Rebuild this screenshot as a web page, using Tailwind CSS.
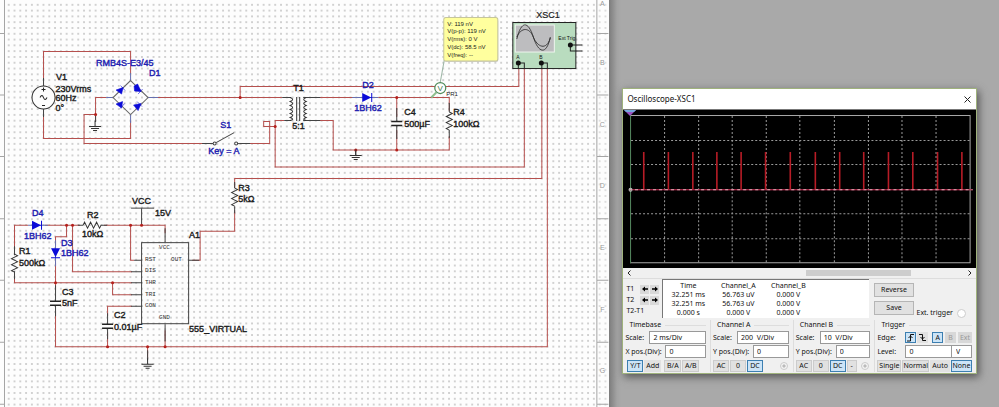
<!DOCTYPE html>
<html lang="en">
<head>
<meta charset="utf-8">
<title>Circuit simulation</title>
<script src="https://cdn.jsdelivr.net/npm/@tailwindcss/browser@4"></script>
</head>
<body class="bg-[#a9a9a9] font-['Noto_Sans',sans-serif] text-[7px] leading-[10px] text-[#111]">
<div class="flex min-h-screen items-stretch overflow-hidden">
<main class="w-[61%] shrink-0 overflow-hidden bg-[#fdfdfd]">
<svg viewBox="0 0 609 407" class="block w-full" role="img" aria-label="555 timer and rectifier schematic" font-family="Liberation Sans, sans-serif" font-size="9">
  <defs>
    <pattern id="dots" width="5.79" height="5.79" x="11.6" y="1.9" patternUnits="userSpaceOnUse"><rect x="2.3" y="2.3" width="1.200" height="1.200" fill="#888"/></pattern>
    <g id="gnd" stroke="#333" fill="none"><path d="M0-6V0M-6 0H6M-4 2H4M-2 4H2"/></g>
    <path id="res" d="M0-9l3 1.5-6 3 6 3-6 3 6 3-6 3 3 1.5" fill="none" stroke="#333"/>
    <path id="dio" d="M-5-4.5V4.5L4 0Z M4-4.5H5V4.5H4Z" fill="#0a0ad8"/>
  </defs>
  <rect width="609" height="407" fill="#fdfdfd"/>
  <rect x="5" width="591" height="407" fill="url(#dots)"/>
  <rect x="596" width="12" height="407" fill="url(#dots)" opacity=".7"/>
  <!-- sheet rulers -->
  <path d="M4.5 0V407M596.5 0V407M0 33.500h4M0 95h4M0 156.500h4M0 218.500h4M0 280h4M0 342h4M0 404h4M596 33.500h12M596 95h12M596 156.500h12M596 218.500h12M596 280h12M596 342h12M596 404h12" stroke="#a5a5a5" fill="none"/>
  <g fill="#999" font-size="7" text-anchor="middle"><text x="602" y="6">A</text><text x="602" y="65">B</text><text x="602" y="127">C</text><text x="602" y="188">D</text><text x="602" y="250">E</text><text x="602" y="312">F</text><text x="602" y="373">G</text></g>
  <!-- wires -->
  <g fill="none" stroke="#b5504e">
    <path d="M43.500 80V51.500H130.500V74M43.500 115V138.500H130.500V121"/>
    <path d="M106 97.500H95.500V121M95.500 114.500H84V143.500H208M154 97.500H282M240 97.500V86.500H518.500V64"/>
    <path d="M240 143.500H269.500V121.500H263.500V126.500H275M284 120.500H275V167H524V64"/>
    <path d="M312 97.500H355M378 97.500H449V111M449 136V150H333V120.500H312M396.500 97.500V117M396.500 130V150"/>
    <path d="M541.500 64V178.500H234.500V188M234.500 210V231H200V260H192M547 64V346.500H55.500V310"/>
    <path d="M14.500 250V225H28M45 225H80M104 225H165V233M66.500 225V236.500H55.500V245M72.500 225V271.500H132M14.500 273V282.500H132M55.500 262V290M112.500 282.500V294.500H132M130.500 225V260H134M107.500 316V306H132M107.500 332V346M165 330V346M147.500 346V358"/>
  </g>
  <!-- component leads -->
  <g fill="none" stroke="#444">
    <path d="M43.500 78V86M43.500 109V117M95.500 116V122M202 143.500H213M240 143.500H250M282 97.500H291M284 120.500H291M303 97.500H320M303 120.500H320M396.500 108V121M396.500 126V139M449 103V112M449 130V138M234.500 182V188M234.500 206V213M355.500 150V156M55.500 285V301M55.500 305V316M107.500 313V324M107.500 328V339M141.500 208V225M165 228V242M165 324V341M188 260H199M134 260H142M131 271.500H142M131 282.500H142M131 294.500H142M131 306H142M14.500 246V255M14.500 271V279M78 225H83M101 225H107M147.500 350V360"/>
    <path d="M131 208H154"/>
    <rect x="141.500" y="242.500" width="47" height="81" fill="none"/>
  </g>
  <g stroke="#222" stroke-width="1.500"><path d="M391 121.500H402M391 125.500H402M50 301H61M50 305H61M102 324H113M102 328H113"/></g>
  <!-- blue leads -->
  <path d="M106 97.500H113M148 97.500H158M130.500 73V81M130.500 115V123M352 97.500H378M28 225H48M55.500 240V266" stroke="#6670b0" fill="none"/>
  <!-- junctions -->
  <g fill="#b5201c"><circle cx="95.500" cy="114.500" r="1.500"/><circle cx="240" cy="97.500" r="1.500"/><circle cx="275" cy="126.500" r="1.500"/><circle cx="396.500" cy="97.500" r="1.500"/><circle cx="396.500" cy="150" r="1.500"/><circle cx="355.500" cy="150" r="1.500"/><circle cx="66.500" cy="225" r="1.500"/><circle cx="72.500" cy="225" r="1.500"/><circle cx="130.500" cy="225" r="1.500"/><circle cx="141.500" cy="225" r="1.500"/><circle cx="55.500" cy="282.500" r="1.500"/><circle cx="112.500" cy="282.500" r="1.500"/><circle cx="107.500" cy="346.500" r="1.500"/><circle cx="147.500" cy="346.500" r="1.500"/><circle cx="165" cy="346.500" r="1.500"/></g>
  <!-- AC source -->
  <circle cx="43.500" cy="97.500" r="11.500" fill="#fdfdfd" stroke="#333"/>
  <path d="M40 97.500q2-4 3.500 0t3.500 0M41.500 89.500h4M43.500 87.500v4M42 105.500h3" fill="none" stroke="#222"/>
  <!-- bridge rectifier -->
  <path d="M130.500 80.500L148 97.500L130.500 114.500L113 97.500Z" fill="none" stroke="#666"/>
  <g fill="#0a0ad8" stroke="#0a0ad8" stroke-width=".6">
    <path d="M116 90L123 87.500L121.500 94ZM120.500 85.500L125 90.500"/>
    <path d="M134 86L134.500 91L141 91.500L137.500 84ZM138 94L142.500 89"/>
    <path d="M116 104L122.500 101.500L121.500 108ZM120 108.500L124.500 103.500"/>
    <path d="M133.500 105L138 110.500L141 103.500ZM137 101.500L142 106.500"/>
  </g>
  <use href="#gnd" x="95" y="126.500"/><use href="#gnd" x="355.500" y="155.500"/><use href="#gnd" x="147.500" y="364"/>
  <use href="#res" x="449" y="121"/><use href="#res" x="234.500" y="197"/><use href="#res" x="14.500" y="263"/>
  <use href="#res" transform="translate(92 225) rotate(90)"/>
  <use href="#dio" x="367" y="97.500"/><use href="#dio" x="37" y="225"/><use href="#dio" transform="translate(55.500 253) rotate(90)"/>
  <!-- switch -->
  <g fill="#fdfdfd" stroke="#444"><path d="M236 143.500H242"/><circle cx="214.500" cy="143.500" r="1.500"/><circle cx="236" cy="143.500" r="1.500"/><path d="M216 142.500L234 132.500"/></g>
  <!-- transformer -->
  <g fill="none" stroke="#333"><path d="M296.500 97V121M299.500 97V121"/><path d="M290 97.500q5 2 0 4q5 2 0 4q5 2 0 4q5 2 0 4q5 2 0 4q5 2 0 3M306 97.500q-5 2 0 4q-5 2 0 4q-5 2 0 4q-5 2 0 4q-5 2 0 4q-5 2 0 3"/></g>
  <!-- probe -->
  <path d="M431 97.500l5-5" stroke="#8fc08f" stroke-width="2"/><path d="M440 82L444 60" stroke="#9bb5a5"/>
  <circle cx="440" cy="88" r="5.500" fill="#fdfdfd" stroke="#4c8a58" stroke-width="1.200"/><text x="440" y="91" text-anchor="middle" font-size="8" fill="#3e7a4a">V</text>
  <text x="446" y="96" font-size="6" fill="#222">PR1</text>
  <rect x="444" y="19" width="54" height="43" rx="2" fill="#bbb" opacity=".6"/>
  <rect x="443.500" y="17.500" width="54" height="43.500" rx="2" fill="#ffff9e" stroke="#c6c69a"/>
  <g font-size="6" fill="#222"><text x="447" y="26">V: 119 nV</text><text x="447" y="33">V(p-p): 119 nV</text><text x="447" y="41">V(rms): 0 V</text><text x="447" y="48.500">V(dc): 58.5 nV</text><text x="447" y="56.500">V(freq): --</text></g>
  <!-- oscilloscope instrument -->
  <rect x="512.500" y="22.500" width="63" height="46" fill="#b9dcbf" stroke="#222"/>
  <rect x="515" y="25" width="39" height="27" fill="#bdbdbf" stroke="#eef5ee"/>
  <path d="M516.500 39C521 20 528 21 533 37S546 56 550 37M516.500 37C521 27 529 27 533 37S546 51 550 38" fill="none" stroke="#333" stroke-width=".9"/>
  <path d="M518 63h6v6M541 63h6v6M518 63v6M541.500 63v6M570 45h12M570 45v6h12" fill="none" stroke="#222"/>
  <g fill="#111"><circle cx="518" cy="63" r="2.500"/><circle cx="541" cy="63" r="2.500"/><circle cx="570" cy="45" r="2.500"/></g>
  <g font-size="5" fill="#111"><text x="516" y="59">A</text><text x="539" y="59">B</text><text x="558" y="40">Ext Trig</text></g>
  <!-- labels -->
  <g fill="#1c1c1c" stroke="#1c1c1c" stroke-width=".4">
    <text x="56" y="80">V1</text><text x="55.500" y="92">230Vrms</text><text x="55.500" y="101">60Hz</text><text x="55.500" y="111">0°</text>
    <text x="293" y="91">T1</text><text x="292" y="129">5:1</text><text x="404" y="115">C4</text><text x="404" y="127">500µF</text><text x="453" y="115">R4</text><text x="453" y="127">100kΩ</text>
    <text x="238" y="191">R3</text><text x="238" y="202">5kΩ</text><text x="132" y="204">VCC</text><text x="155" y="216">15V</text><text x="189" y="238">A1</text>
    <text x="87" y="218">R2</text><text x="82" y="237">10kΩ</text><text x="19" y="254">R1</text><text x="19" y="266">500kΩ</text><text x="62" y="295">C3</text><text x="62" y="306">5nF</text>
    <text x="114" y="318">C2</text><text x="114" y="330">0.01µF</text><text x="189" y="332">555_VIRTUAL</text>
  </g>
  <text x="536" y="18" fill="#1c1c1c" stroke="#1c1c1c" stroke-width=".2">XSC1</text>
  <g fill="#2020b0" stroke="#2020b0" stroke-width=".4">
    <text x="96" y="66">RMB4S-E3/45</text><text x="149" y="76">D1</text><text x="362" y="88">D2</text><text x="354" y="111">1BH62</text><text x="220" y="128">S1</text><text x="208" y="154">Key = A</text>
    <text x="32" y="216">D4</text><text x="24" y="239">1BH62</text><text x="61" y="246">D3</text><text x="61" y="256">1BH62</text>
  </g>
  <g font-family="Liberation Mono, monospace" font-size="6" fill="#333"><text x="159" y="249">VCC</text><text x="145" y="261">RST</text><text x="171" y="261">OUT</text><text x="145" y="272">DIS</text><text x="145" y="284">THR</text><text x="145" y="296">TRI</text><text x="145" y="307">CON</text><text x="159" y="319">GND</text></g>
</svg>
</main>

<div class="flex min-w-0 flex-1 items-start bg-[linear-gradient(to_right,#7c7c7c,#a3a3a3_8px,#a9a9a9_12px)] pt-[88px] pr-[22px] pl-[13px]">
<section aria-label="Oscilloscope" class="min-w-0 flex-1 border border-[#9fb27c] bg-[#f0f0f0] shadow-[2px_3px_8px_#555]">
  <header class="flex h-5 items-center justify-between bg-white pr-1 pl-1">
    <h1 class="text-[8px]">Oscilloscope-XSC1</h1>
    <button aria-label="Close" class="p-px"><svg class="size-[7px]" viewBox="0 0 7 7" stroke="#222" fill="none"><path d="M.5.5l6 6M6.500.5l-6 6"/></svg></button>
  </header>
  <div class="border-t border-[#777] bg-black">
  <svg viewBox="623 110 352 158" class="block w-full" role="img" aria-label="Pulse train on channel A">
    <g stroke="#9a9a9a" stroke-dasharray="2 2" fill="none"><path d="M664.500 116V262M698.500 116V262M732 116V262M766 116V262M799.500 116V262M834 116V262M868 116V262M901.500 116V262M935.500 116V262M631 140.500H969M631 164.500H969M631 213.500H969M631 238.500H969"/></g>
    <rect x="630.500" y="115.500" width="339" height="147" fill="none" stroke="#a8a8a8"/>
    <path d="M630.500 115V263" stroke="#4e8058"/>
    <path d="M629 189.500H972" stroke="#d03058"/><path d="M629 189.500H972" stroke="#e5b5bf" stroke-dasharray="3 3"/>
    <path d="M643.700 152V189M668.300 152V189M692.700 152V189M716.700 152V189M740.900 152V189M765.300 152V189M790 152V189M815 152V189M839.300 152V189M863.300 152V189M888 152V189M912.300 152V189M937 152V189M961.300 152V189" stroke="#b71c26" stroke-width="1.600"/>
    <path d="M624 110H636L630 116Z" fill="#9a54c4"/><path d="M624 110H636L634 112H626Z" fill="#77a7dc"/>
    <circle cx="630.500" cy="189.500" r="1.500" fill="none" stroke="#bbb"/>
  </svg>
  </div>
  <div class="flex h-[11px] items-center border-b border-[#ddd] px-1">
    <button aria-label="Scroll left"><svg class="h-[6px] w-1" viewBox="0 0 4 6" stroke="#222" fill="none"><path d="M3.500.5L1 3l2.500 2.500"/></svg></button>
    <div class="mx-1 flex-1"><div class="ml-[52%] h-[6px] w-[32%] bg-[#cdcdcd]"></div></div>
    <button aria-label="Scroll right"><svg class="h-[6px] w-1" viewBox="0 0 4 6" stroke="#222" fill="none"><path d="M.5.5L3 3L.5 5.500"/></svg></button>
  </div>
  <div class="flex h-[39px]">
    <div class="flex w-[39px] shrink-0 flex-col gap-px pt-[5px] pl-[3px]">
      <div class="flex items-center gap-px"><span class="w-[13px]">T1</span>
        <button aria-label="T1 left" class="flex size-[9px] items-center justify-center bg-[#d9d9d9]"><svg class="size-[6px]" viewBox="0 0 7 7"><path d="M0 3.500L3.500.5V2.500H7V4.500H3.500V6.500Z"/></svg></button>
        <button aria-label="T1 right" class="flex size-[9px] items-center justify-center bg-[#d9d9d9]"><svg class="size-[6px]" viewBox="0 0 7 7"><path d="M7 3.500L3.500.5V2.500H0V4.500H3.500V6.500Z"/></svg></button></div>
      <div class="flex items-center gap-px"><span class="w-[13px]">T2</span>
        <button aria-label="T2 left" class="flex size-[9px] items-center justify-center bg-[#d9d9d9]"><svg class="size-[6px]" viewBox="0 0 7 7"><path d="M0 3.500L3.500.5V2.500H7V4.500H3.500V6.500Z"/></svg></button>
        <button aria-label="T2 right" class="flex size-[9px] items-center justify-center bg-[#d9d9d9]"><svg class="size-[6px]" viewBox="0 0 7 7"><path d="M7 3.500L3.500.5V2.500H0V4.500H3.500V6.500Z"/></svg></button></div>
      <span>T2-T1</span>
    </div>
    <div class="min-w-0 flex-1 border-t border-l border-[#777] bg-white pt-px">
      <table class="w-[150px] table-fixed text-center leading-[9px]">
        <thead><tr><th class="p-0 font-normal">Time</th><th class="p-0 font-normal">Channel_A</th><th class="p-0 font-normal">Channel_B</th></tr></thead>
        <tbody><tr><td class="p-0">32.251 ms</td><td class="p-0">56.763 uV</td><td class="p-0">0.000 V</td></tr>
        <tr><td class="p-0">32.251 ms</td><td class="p-0">56.763 uV</td><td class="p-0">0.000 V</td></tr>
        <tr><td class="p-0">0.000 s</td><td class="p-0">0.000 V</td><td class="p-0">0.000 V</td></tr></tbody>
      </table>
    </div>
    <div class="flex w-[107px] shrink-0 items-end justify-between pr-[10px] pl-[5px]">
      <div class="flex flex-col gap-1 self-start pt-1">
        <button class="h-[14px] w-10 border border-[#b5b5b5] bg-[#e1e1e1]">Reverse</button>
        <button class="h-[14px] w-10 border border-[#b5b5b5] bg-[#e1e1e1]">Save</button>
      </div>
      <label class="flex items-center gap-1 whitespace-nowrap">Ext. trigger<input type="radio" class="size-[9px] appearance-none rounded-full border border-[#ccc] bg-white"></label>
    </div>
  </div>
  <div class="mt-[2px] grid grid-cols-[minmax(0,87fr)_minmax(0,83fr)_minmax(0,82fr)_minmax(0,102fr)] pb-px">
    <section class="flex flex-col gap-px pr-1 pl-[2px]">
      <div class="flex h-[10px] items-center gap-1 pl-1"><h2>Timebase</h2><span class="h-px flex-1 bg-[#ddd]"></span></div>
      <div class="flex items-center gap-1"><label for="ts" class="w-[20px]">Scale:</label><input id="ts" value="2 ms/Div" class="h-[13px] min-w-0 flex-1 border border-[#999] bg-white px-[3px]"></div>
      <div class="flex items-center gap-[2px] whitespace-nowrap"><label for="tx" class="w-[38px]">X pos.(Div):</label><input id="tx" value="0" class="h-[13px] min-w-0 flex-1 border border-[#999] bg-white px-[3px]"></div>
      <div class="flex gap-px pt-px pl-[2px]">
        <button class="h-3 w-4 border border-[#3c7fb1] bg-[#cce4f7]">Y/T</button><button class="h-3 w-[17px] bg-[#e1e1e1]">Add</button><button class="ml-[2px] h-3 w-[17px] border border-[#ccc] bg-[#e1e1e1]">B/A</button><button class="h-3 w-[17px] border border-[#ccc] bg-[#e1e1e1]">A/B</button>
      </div>
    </section>
    <section class="flex flex-col gap-px border-l border-[#ddd] pr-1 pl-[2px]">
      <div class="flex h-[10px] items-center gap-1 pl-1"><h2>Channel A</h2><span class="h-px flex-1 bg-[#ddd]"></span></div>
      <div class="flex items-center gap-1"><label for="as" class="w-[20px]">Scale:</label><input id="as" value="200  V/Div" class="h-[13px] min-w-0 flex-1 border border-[#999] bg-white px-[3px]"></div>
      <div class="flex items-center gap-[2px] whitespace-nowrap"><label for="ay" class="w-[38px]">Y pos.(Div):</label><input id="ay" value="0" class="h-[13px] min-w-0 flex-1 border border-[#999] bg-white px-[3px]"></div>
      <div class="flex items-center gap-px pt-px">
        <button class="h-3 w-4 border border-[#ccc] bg-[#e1e1e1]">AC</button><button class="h-3 w-4 border border-[#ccc] bg-[#e1e1e1]">0</button><button class="h-3 w-4 border border-[#3c7fb1] bg-[#cce4f7]">DC</button>
        <input type="radio" aria-label="Channel A input" class="mr-px ml-auto size-2 appearance-none rounded-full border border-[#ccc] bg-[radial-gradient(#bbb_30%,#f4f4f4_45%)]">
      </div>
    </section>
    <section class="flex flex-col gap-px border-l border-[#ddd] pr-1 pl-[2px]">
      <div class="flex h-[10px] items-center gap-1 pl-1"><h2>Channel B</h2><span class="h-px flex-1 bg-[#ddd]"></span></div>
      <div class="flex items-center gap-1"><label for="bs" class="w-[20px]">Scale:</label><input id="bs" value="10  V/Div" class="h-[13px] min-w-0 flex-1 border border-[#999] bg-white px-[3px]"></div>
      <div class="flex items-center gap-[2px] whitespace-nowrap"><label for="by" class="w-[38px]">Y pos.(Div):</label><input id="by" value="0" class="h-[13px] min-w-0 flex-1 border border-[#999] bg-white px-[3px]"></div>
      <div class="flex items-center gap-px pt-px">
        <button class="h-3 w-4 border border-[#ccc] bg-[#e1e1e1]">AC</button><button class="h-3 w-4 border border-[#ccc] bg-[#e1e1e1]">0</button><button class="h-3 w-4 border border-[#3c7fb1] bg-[#cce4f7]">DC</button><button class="h-3 w-[10px] border border-[#ccc] bg-[#e1e1e1]">-</button>
        <input type="radio" aria-label="Channel B input" class="mr-px ml-auto size-2 appearance-none rounded-full border border-[#ccc] bg-[radial-gradient(#bbb_30%,#f4f4f4_45%)]">
      </div>
    </section>
    <section class="flex flex-col gap-px border-l border-[#ddd] pr-1 pl-[2px]">
      <div class="flex h-[10px] items-center gap-1 pl-1"><h2>Trigger</h2><span class="h-px flex-1 bg-[#ddd]"></span></div>
      <div class="flex h-[13px] items-center gap-px"><span class="w-[27px]">Edge:</span>
        <button aria-label="Rising edge" class="flex h-[11px] w-[11px] items-center justify-center border border-[#3c7fb1] bg-[#cce4f7]"><svg class="size-[9px]" viewBox="0 0 9 9" stroke="#111" fill="none"><path d="M1 8H4.500V1.500H8M2.500 5l2-2 2 2"/></svg></button>
        <button aria-label="Falling edge" class="flex h-[11px] w-[11px] items-center justify-center bg-[#e1e1e1]"><svg class="size-[9px]" viewBox="0 0 9 9" stroke="#111" fill="none"><path d="M1 1.500H4.500V7.500H8M2.500 4l2 2 2-2"/></svg></button>
        <button class="ml-[3px] h-[11px] w-[11px] border border-[#3c7fb1] bg-[#cce4f7] leading-[9px]">A</button><button class="ml-px h-[11px] w-[11px] bg-[#d8d8d8] text-[#999]">B</button><button class="ml-px h-[11px] w-[14px] bg-[#d8d8d8] text-[#999]">Ext</button></div>
      <div class="flex items-center"><label for="lv" class="w-[28px]">Level:</label><input id="lv" value="0" class="h-[13px] min-w-0 flex-1 border border-[#999] bg-white px-[3px]"><input aria-label="Level unit" value="V" class="h-[13px] w-[20px] border border-l-0 border-[#999] bg-white px-1"></div>
      <div class="flex justify-between pt-px">
        <button class="h-3 w-6 border border-[#ccc] bg-[#e1e1e1]"><span class="flex justify-center">Single</span></button><button class="h-3 w-[27px] border border-[#ccc] bg-[#e1e1e1]"><span class="flex justify-center">Normal</span></button><button class="h-3 w-5 bg-[#e1e1e1]">Auto</button><button class="h-3 w-[21px] border border-[#3c7fb1] bg-[#cce4f7]"><span class="flex justify-center">None</span></button>
      </div>
    </section>
  </div>
</section>
</div>
</div>
</body>
</html>
